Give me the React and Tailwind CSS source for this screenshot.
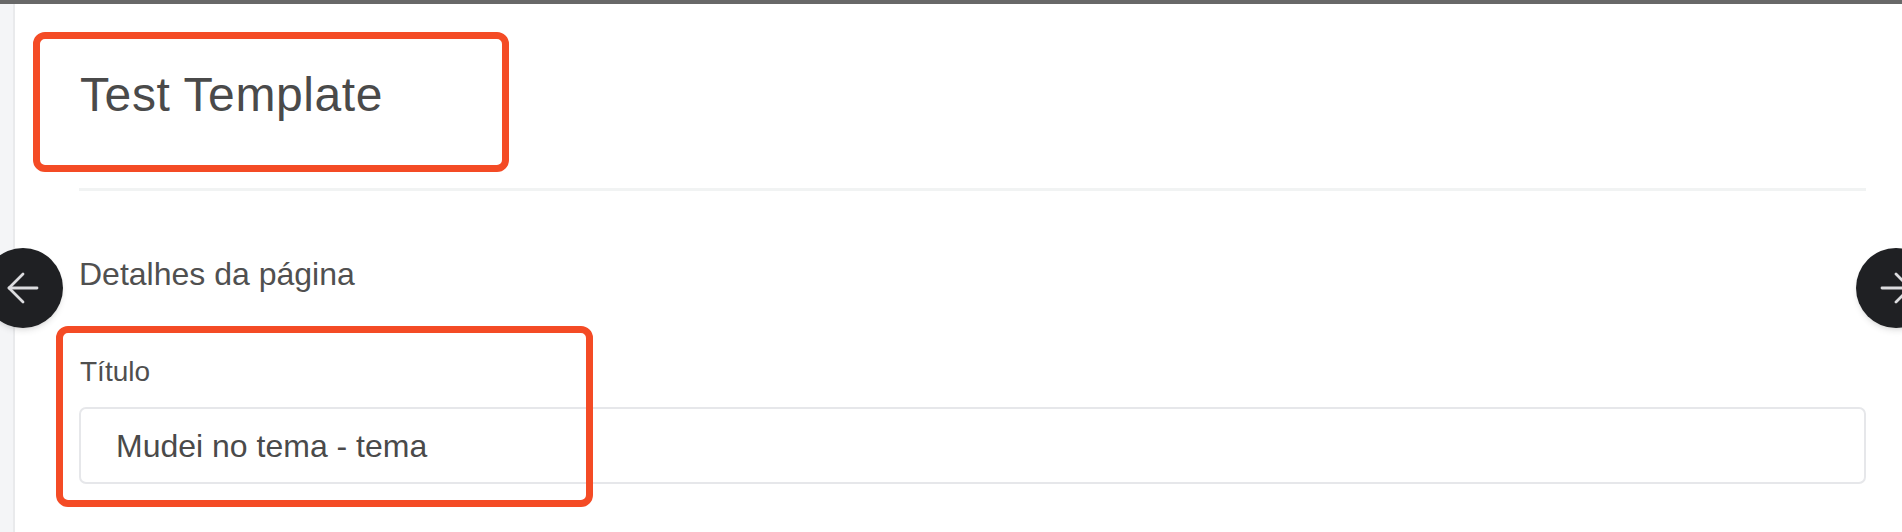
import React from "react";
import { ArrowLeft, ArrowRight } from "lucide-react";

function NavButton({ side }) {
  const Icon = side === "left" ? ArrowLeft : ArrowRight;
  return (
    <button
      className={
        "absolute top-[248px] w-[80px] h-[80px] rounded-full bg-[#1f2023] shadow-md flex items-center justify-center " +
        (side === "left" ? "left-[-17px]" : "left-[1856px]")
      }
    >
      <Icon size={48} strokeWidth={1.4} color="#dcdcdf" />
    </button>
  );
}

export default function App() {
  return (
    <div
      className="relative w-[1902px] h-[532px] bg-white overflow-hidden"
      style={{ fontFamily: '"Liberation Sans", Arial, sans-serif' }}
    >
      <div className="h-[4px] bg-[#686868]" />
      <div className="flex h-[528px]">
        <div className="w-[15px] shrink-0 bg-[#f4f5f7] border-r-2 border-[#e9eaec]" />
        <div className="flex-1 flex flex-col pl-[64px] pr-[36px] pt-[63px]">
          <h1 className="text-[48px] leading-[56px] tracking-[0.6px] text-[#4a4a4a] font-normal pl-px">
            Test Template
          </h1>
          <div className="mt-[65px] h-[3px] bg-[#f1f3f3]" />
          <h2 className="mt-[65px] text-[32px] leading-[36px] text-[#505050]">
            Detalhes da página
          </h2>
          <label className="mt-[64px] text-[28px] leading-[32px] text-[#4f4f4f] pl-px">
            Título
          </label>
          <div className="mt-[19px] h-[77px] border-2 border-[#e6e7ea] rounded-[7px] flex items-center pl-[35px] text-[32px] leading-[40px] text-[#4a4a4a]">
            Mudei no tema - tema
          </div>
        </div>
      </div>

      <NavButton side="left" />
      <NavButton side="right" />

      {/* annotation highlight boxes */}
      <div className="absolute left-[33px] top-[32px] w-[476px] h-[140px] border-[7px] border-[#f44b25] rounded-[12px] pointer-events-none" />
      <div className="absolute left-[56px] top-[326px] w-[537px] h-[181px] border-[7px] border-[#f44b25] rounded-[12px] pointer-events-none" />
    </div>
  );
}
